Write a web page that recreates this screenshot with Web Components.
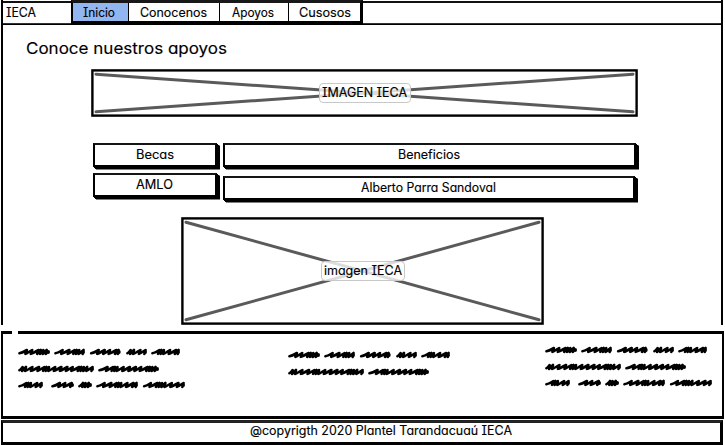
<!DOCTYPE html>
<html lang="es">
<head>
<meta charset="utf-8">
<title>IECA</title>
<style>
body{margin:0;background:#fff;color:#000;width:725px;height:445px;overflow:hidden;font-family:Inter,"Open Sans",sans-serif;font-feature-settings:"cv11","cv08","ss03"}
</style>
</head>
<body>
<ieca-page></ieca-page>
<script>
// Hand-lettered label: w = advance width of the lettering in px.
customElements.define('sketch-text', class extends HTMLElement{
  connectedCallback(){
    const w=+this.getAttribute('w'), s=this.getAttribute('size')||12.6;
    this.attachShadow({mode:'open'}).innerHTML=`<style>:host{display:block;height:20px;width:${w}px;flex:none}svg{display:block;overflow:visible}text{font-size:${s}px;fill:#000;stroke:#000;stroke-width:.15px}</style>
    <svg width="${w}" height="20"><text x="0" y="15" textLength="${w}" lengthAdjust="spacingAndGlyphs">${this.getAttribute('text')}</text></svg>`;
  }
});
customElements.define('nav-tab', class extends HTMLElement{
  connectedCallback(){
    this.attachShadow({mode:'open'}).innerHTML=`<style>:host{display:flex;justify-content:center;box-sizing:border-box;height:18px;border-right:1.5px solid #000;background:#fff}:host([active]){background:#92b6f0}:host(:last-child){border-right:0}::slotted(*){margin-top:-1px;margin-right:2px}:host([active]) ::slotted(*){margin-right:3px}:host(:last-child) ::slotted(*){margin-right:-1px}</style><slot></slot>`;
  }
});
customElements.define('top-bar', class extends HTMLElement{
  connectedCallback(){
    this.attachShadow({mode:'open'}).innerHTML=`<style>
    :host{display:grid;grid-template-columns:68px 292px 1fr;box-sizing:border-box;height:25px;margin:0 2px 0 1px;border:2px solid #000;border-top:0;border-bottom:0;background:linear-gradient(#fff 0 1px,#111 1px 3px,#fff 3px 23px,#333 23px 24px,#000 24px)}
    .brand{padding:2px 0 0 3px}
    nav{display:grid;grid-template-columns:56px 91px 69px 71px;border:solid #000;border-width:3px 3px 4px 2px;border-top-color:#181818;box-sizing:border-box;height:25px}
    </style><div class="brand"><slot name="brand"></slot></div><nav><slot></slot></nav>`;
  }
});
customElements.define('image-box', class extends HTMLElement{
  connectedCallback(){
    const w=+this.getAttribute('w'),h=+this.getAttribute('h'),lw=this.getAttribute('label-w');
    this.attachShadow({mode:'open'}).innerHTML=`<style>
    :host{display:grid;width:${w}px;height:${h}px;place-items:center}
    svg,.tag{grid-area:1/1}svg{display:block}
    .tag{display:flex;justify-content:center;box-sizing:border-box;width:${lw}px;height:20px;border:1px solid #c8c8c8;border-radius:4px;background:rgba(255,255,255,.79)}
    .tag ::slotted(*){margin-top:-2px}
    </style><svg width="${w}" height="${h}"><rect x="1.4" y="1.4" width="${w-2.8}" height="${h-2.8}" fill="#fff" stroke="#000" stroke-width="2.4"/><path d="M5 5.2L${w-5} ${h-5.2}M5 ${h-5.2}L${w-5} 5.2" stroke="#5a5a5a" stroke-width="3" stroke-linecap="round"/></svg><div class="tag"><slot></slot></div>`;
  }
});
customElements.define('sketch-button', class extends HTMLElement{
  connectedCallback(){
    this.attachShadow({mode:'open'}).innerHTML=`<style>:host{display:flex;justify-content:center;box-sizing:border-box;height:24px;border:2px solid #000;border-top-color:#151515;background:#fff;box-shadow:1px 1px #000,2px 2px #000,3px 2.5px #000}::slotted(*){margin-top:-1px;margin-right:1px}</style><slot></slot>`;
  }
});
// Paragraph of scribbled words, given as [start,end] spans per line.
const LINES=[[[0,32],[36,67],[71.7,102.7],[108,129],[133,162]],[[0,76],[80,141]],[[0,25],[33,56],[60,74],[78,120],[124.7,167]]];
const STEPS=[7.5,6.8,8,3.6,3.2,4,7.2,8.2,7,3.4,3.2,6.8,7.6];
customElements.define('scribble-text', class extends HTMLElement{
  connectedCallback(){
    const n=+this.getAttribute('lines');let d='',k=0;
    LINES.slice(0,n).forEach((line,r)=>{
      const y=[4,21,37][r];
      k=r*4;
      for(const [a,b] of line){
        let x=a+1.4;d+=`M${x} ${y+1.2}`;
        while(x<b-4.5){
          const s=Math.min(STEPS[k++%STEPS.length],b-x-1.4);
          d+=`Q${(x+s*.3).toFixed(1)} ${y+1} ${(x+s).toFixed(1)} ${y-2}L${(x+s*.8).toFixed(1)} ${y+1.9}`;
          x+=s*.8;
        }
        d+=`L${b-1.4} ${y-.6}L${b-1.4} ${y+.6}`;
      }
    });
    this.attachShadow({mode:'open'}).innerHTML=`<style>:host{display:block}svg{display:block;overflow:visible}</style><svg width="170" height="42"><path d="${d}" fill="none" stroke="#000" stroke-width="2.6" stroke-linecap="round" stroke-linejoin="round"/></svg>`;
  }
});
customElements.define('page-footer', class extends HTMLElement{
  connectedCallback(){
    this.attachShadow({mode:'open'}).innerHTML=`<style>
    :host{display:block}
    .info{display:grid;grid-template-columns:270px 257px 1fr;box-sizing:border-box;height:88px;margin:0 1px;padding:14px 0 0 14.5px;border:2px solid #000;border-width:0 2px 3px;background:linear-gradient(90deg,#000 0 9px,#fff 9px 15px,#000 15px) 0 0/100% 3px no-repeat}
    .one{padding-top:3px}.two{padding-top:6px}.three{padding-top:1px}
    .copy{display:flex;padding-left:247px;box-sizing:border-box;height:25px;margin:1px 2px 0 1px;border:solid #000;border-width:3px 3px 3px 2px;border-top-color:#222}
    .copy ::slotted(*){margin-top:-3px}
    </style><div class="info"><scribble-text class="one" lines="3"></scribble-text><scribble-text class="two" lines="2"></scribble-text><scribble-text class="three" lines="3"></scribble-text></div><div class="copy"><slot></slot></div>`;
  }
});
customElements.define('ieca-page', class extends HTMLElement{
  connectedCallback(){
    this.attachShadow({mode:'open'}).innerHTML=`<style>
    :host{display:block}
    main{box-sizing:border-box;height:300px;margin:0 2px 6px 1px;border:solid #000;border-width:0 2px;padding:14px 0 0 23px}
    .hero{margin:10px 0 0 65px}
    .rows{display:grid;grid-template-columns:124px 413px;column-gap:6px;margin:26px 0 0 67px;align-items:start;grid-template-rows:30px 45px}
    .rows sketch-button:nth-child(4){margin-top:3px;margin-right:1px}
    .second{margin:-1px 0 0 155px}
    </style>
    <top-bar><sketch-text slot="brand" text="IECA" w="30"></sketch-text>
      <nav-tab active><sketch-text text="Inicio" w="32"></sketch-text></nav-tab>
      <nav-tab><sketch-text text="Conocenos" w="67"></sketch-text></nav-tab>
      <nav-tab><sketch-text text="Apoyos" w="42"></sketch-text></nav-tab>
      <nav-tab><sketch-text text="Cusosos" w="52"></sketch-text></nav-tab></top-bar>
    <main>
      <sketch-text text="Conoce nuestros apoyos" w="201" size="16"></sketch-text>
      <image-box class="hero" w="547" h="48" label-w="92"><sketch-text text="IMAGEN IECA" w="85"></sketch-text></image-box>
      <div class="rows">
        <sketch-button><sketch-text text="Becas" w="38"></sketch-text></sketch-button>
        <sketch-button><sketch-text text="Beneficios" w="62"></sketch-text></sketch-button>
        <sketch-button><sketch-text text="AMLO" w="37"></sketch-text></sketch-button>
        <sketch-button><sketch-text text="Alberto Parra Sandoval" w="135"></sketch-text></sketch-button>
      </div>
      <image-box class="second" w="363" h="108" label-w="84"><sketch-text text="imagen IECA" w="78"></sketch-text></image-box>
    </main>
    <page-footer><sketch-text text="@copyrigth 2020 Plantel Tarandacuaú IECA" w="262"></sketch-text></page-footer>`;
  }
});
</script>
</body>
</html>
